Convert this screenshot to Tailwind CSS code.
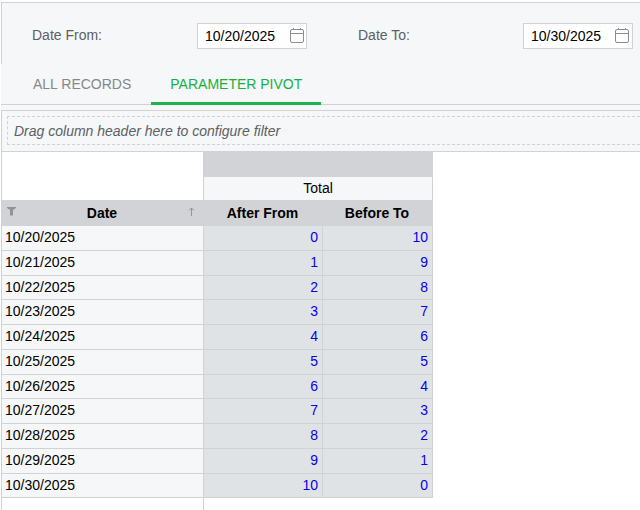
<!DOCTYPE html>
<html lang="en">
<head>
  <meta charset="UTF-8" />
  <meta name="viewport" content="width=device-width, initial-scale=1" />
  <title>Parameter Pivot</title>
  <script src="https://cdn.jsdelivr.net/npm/@tailwindcss/browser@4"></script>
</head>

<body class="flex flex-col min-h-screen overflow-x-hidden bg-white pt-[2px] pl-px font-['Liberation_Sans',Arial,sans-serif] text-sm text-black">

  <!-- Parameters -->
  <form class="grid grid-cols-2 gap-[51px] h-[62px] border-t border-l border-[#d0d2d4] bg-[#f5f7f9] pt-5 pl-[30px] pr-[7px]">
    <div class="flex items-start justify-between">
      <label for="date-from" class="pt-[2px] text-[#5c6064]">Date From:</label>
      <div class="flex items-center w-[110px] h-[26px] border border-[#d0d2d4] bg-white pl-[7px] pr-px">
        <input type="text" id="date-from" value="10/20/2025" class="flex-1 min-w-0 outline-none" />
        <button type="button" aria-label="Pick start date">
          <svg class="block" width="16" height="16" viewBox="0 0 16 16" fill="none" stroke="#8c8c8c">
            <rect x="1.5" y="1.5" width="13" height="13" rx="1.5" />
            <path d="M2 5.5h12M4.5 0v2M11.5 0v2" />
          </svg>
        </button>
      </div>
    </div>
    <div class="flex items-start justify-between">
      <label for="date-to" class="pt-[2px] text-[#5c6064]">Date To:</label>
      <div class="flex items-center w-[110px] h-[26px] border border-[#d0d2d4] bg-white pl-[7px] pr-px">
        <input type="text" id="date-to" value="10/30/2025" class="flex-1 min-w-0 outline-none" />
        <button type="button" aria-label="Pick end date">
          <svg class="block" width="16" height="16" viewBox="0 0 16 16" fill="none" stroke="#8c8c8c">
            <rect x="0.5" y="1.5" width="13" height="13" rx="1.5" />
            <path d="M1 5.5h12M3.5 0v2M10.5 0v2" />
          </svg>
        </button>
      </div>
    </div>
  </form>

  <!-- Tabs -->
  <div class="bg-[#f5f7f9] pb-[5px]">
    <div class="flex h-[41px] bg-linear-to-t from-[#d0d2d4] from-[1px] to-transparent to-[1px]">
      <button class="border-b-3 border-transparent pt-[2px] pl-8 pr-5 text-[#85888b]">ALL RECORDS</button>
      <button class="border-b-3 border-[#1eb24a] pt-[2px] px-[19px] text-[#17b140]">PARAMETER PIVOT</button>
    </div>
  </div>

  <!-- Pivot grid -->
  <div class="flex-1 flex flex-col border-t border-l border-[#d0d2d4]">
    <div class="border-b border-[#d0d2d4] bg-[#f5f7f9] pt-[5px] pb-[6px] pl-[5px]">
      <div class="flex items-center h-[29px] border border-r-0 border-dashed border-[#cfd1d3] pl-[6px] italic text-[#5c6064]">Drag column header here to configure filter</div>
    </div>

    <table class="table-fixed w-[431px] border-separate border-spacing-0">
      <colgroup>
        <col class="w-[202px]" />
        <col class="w-[119px]" />
        <col class="w-[110px]" />
      </colgroup>
      <thead>
        <tr class="h-[25px]">
          <td rowspan="2" class="border-r border-[#d0d2d4] p-0"></td>
          <td colspan="2" class="bg-[#d2d3d6] p-0"></td>
        </tr>
        <tr class="h-[23px]">
          <th colspan="2" class="border-r border-[#d0d2d4] bg-[#f5f7f9] p-0 pb-[2px] font-normal">Total</th>
        </tr>
        <tr class="h-[26px] bg-[#d2d3d6]">
          <th class="p-0">
            <div class="flex justify-between px-[5px]">
              <svg class="mt-1" width="9" height="9" viewBox="0 0 9 9" fill="#929497">
                <path d="M0 0h9v1L6 3V8.500H3V3L0 1z" />
              </svg>
              Date
              <svg class="mt-1 mr-1" width="7" height="10" viewBox="0 0 7 10" fill="none" stroke="#929497">
                <path d="M3.500 9V1M1 3.500L3.500 1L6 3.500" />
              </svg>
            </div>
          </th>
          <th class="p-0 pr-[2px]">After From</th>
          <th class="p-0 pr-[2px]">Before To</th>
        </tr>
      </thead>
      <tbody class="[&>tr]:h-[25px] [&>tr:nth-child(4n+3)]:h-6 [&_td]:border-r [&_td]:border-b [&_td]:border-[#d0d2d4] [&_td]:px-1 [&_td]:pt-0 [&_td]:pb-[2px] [&_td]:leading-5 [&_td]:text-right [&_td]:text-[#0800e6] [&_td]:bg-[#dfe3e6] [&_th]:border-r [&_th]:border-b [&_th]:border-[#d0d2d4] [&_th]:px-[3px] [&_th]:pt-0 [&_th]:pb-[2px] [&_th]:leading-5 [&_th]:text-left [&_th]:font-normal [&_th]:bg-[#f5f7f9]">
        <tr><th>10/20/2025</th><td>0</td><td>10</td></tr>
        <tr><th>10/21/2025</th><td>1</td><td>9</td></tr>
        <tr><th>10/22/2025</th><td>2</td><td>8</td></tr>
        <tr><th>10/23/2025</th><td>3</td><td>7</td></tr>
        <tr><th>10/24/2025</th><td>4</td><td>6</td></tr>
        <tr><th>10/25/2025</th><td>5</td><td>5</td></tr>
        <tr><th>10/26/2025</th><td>6</td><td>4</td></tr>
        <tr><th>10/27/2025</th><td>7</td><td>3</td></tr>
        <tr><th>10/28/2025</th><td>8</td><td>2</td></tr>
        <tr><th>10/29/2025</th><td>9</td><td>1</td></tr>
        <tr><th>10/30/2025</th><td>10</td><td>0</td></tr>
      </tbody>
    </table>
    <div class="flex-1 w-[202px] border-r border-[#d0d2d4]"></div>
  </div>
</body>
</html>
